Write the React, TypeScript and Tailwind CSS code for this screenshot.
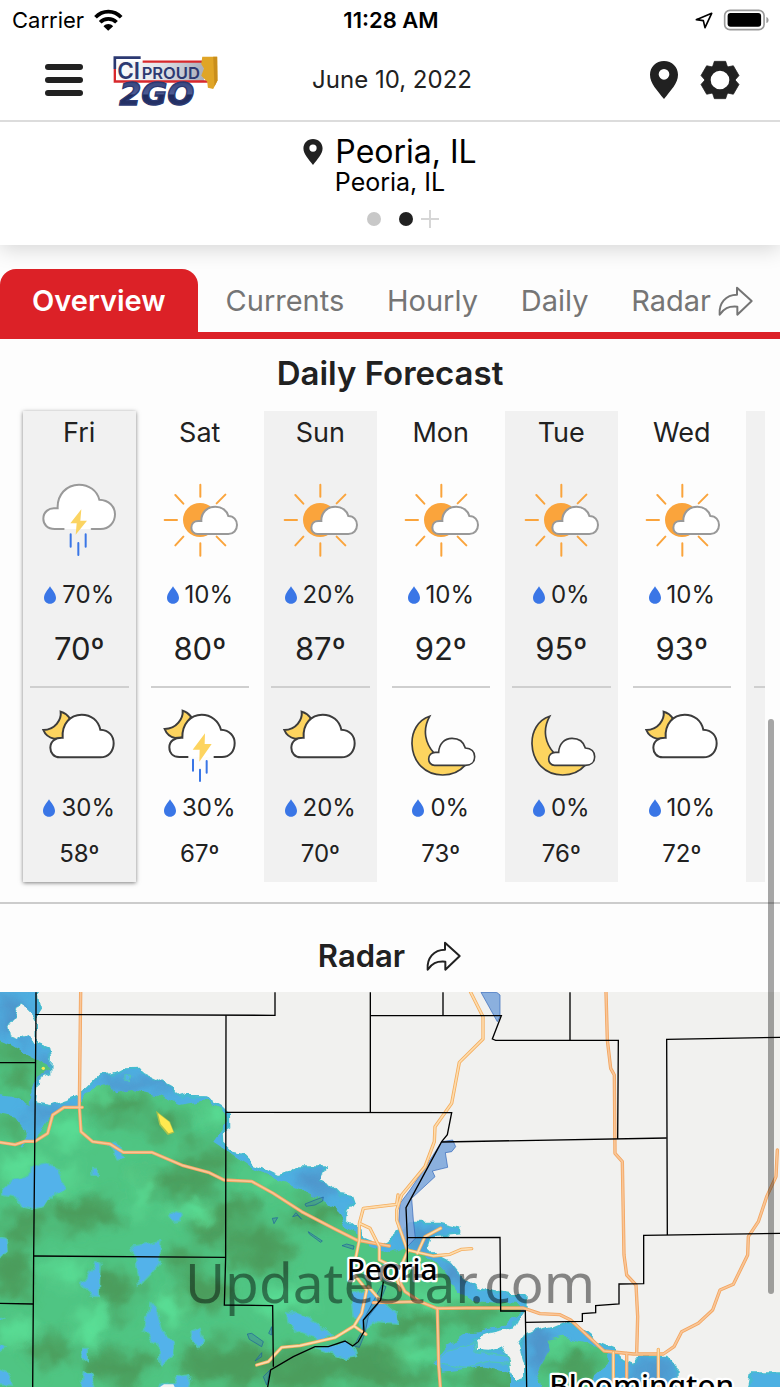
import React from 'react';

type IconName = 'dayStorm' | 'partlySunny' | 'nightCloud' | 'nightStorm' | 'moonCloud';

interface Day {
  name: string;
  dayIcon: IconName;
  dayPrecip: string;
  high: string;
  nightIcon: IconName;
  nightPrecip: string;
  low: string;
}

const days: Day[] = [
  { name: 'Fri', dayIcon: 'dayStorm', dayPrecip: '70%', high: '70º', nightIcon: 'nightCloud', nightPrecip: '30%', low: '58º' },
  { name: 'Sat', dayIcon: 'partlySunny', dayPrecip: '10%', high: '80º', nightIcon: 'nightStorm', nightPrecip: '30%', low: '67º' },
  { name: 'Sun', dayIcon: 'partlySunny', dayPrecip: '20%', high: '87º', nightIcon: 'nightCloud', nightPrecip: '20%', low: '70º' },
  { name: 'Mon', dayIcon: 'partlySunny', dayPrecip: '10%', high: '92º', nightIcon: 'moonCloud', nightPrecip: '0%', low: '73º' },
  { name: 'Tue', dayIcon: 'partlySunny', dayPrecip: '0%', high: '95º', nightIcon: 'moonCloud', nightPrecip: '0%', low: '76º' },
  { name: 'Wed', dayIcon: 'partlySunny', dayPrecip: '10%', high: '93º', nightIcon: 'nightCloud', nightPrecip: '10%', low: '72º' },
];

const WeatherIcon: React.FC<{ name: IconName }> = ({ name }) => {
  if (name === 'dayStorm') {
    return (
      <svg viewBox="118 240 240 240" className="w-20 h-20" strokeWidth="6" strokeLinecap="round">
        <path
          d="M192 387H165C143 387 131 373 131 356C131 336 147 324 165 325H174C172 285 200 254 238 254C268 254 292 272 299 299C328 300 346 320 346 343C346 368 328 387 303 387H276"
          fill="#fff"
          stroke="#999"
        />
        <path d="M245 328L212 370H231L228 404L262 362H242Z" fill="#fbd462" />
        <path d="M213 403V440M236 429V465M258 403V440" stroke="#3a76e6" />
      </svg>
    );
  }

  if (name === 'partlySunny') {
    return (
      <svg viewBox="479 240 240 240" className="w-20 h-20" strokeWidth="6" strokeLinecap="round">
        <circle cx="599" cy="360" r="51" fill="#faa43c" />
        <path
          d="M600 254V290M600 430V467M493 360H530M525 285L549 311M675 284L649 310M525 436L549 410M649 410L675 436"
          stroke="#faa43c"
        />
        <path
          d="M593 402C581 402 573 393 573 383C573 371 582 363 594 363H603C602 338 620 320 645 320C665 320 680 332 684 348C700 348 710 360 710 375C710 391 699 402 684 402Z"
          fill="#fff"
          stroke="#999"
        />
      </svg>
    );
  }

  if (name === 'nightCloud') {
    return (
      <svg viewBox="118 70 240 240" className="w-20 h-20" stroke="#3c3c3c" strokeWidth="6">
        <path d="M183 93C186 117 166 148 131 148C137 163 148 171 163 174L190 172L210 112C204 104 196 97 183 93Z" fill="#fdd45f" />
        <path
          d="M180 230C163 230 152 217 152 201C152 182 167 170 189 171C186 130 211 102 246 102C275 102 296 120 302 147C328 148 342 166 342 188C342 212 326 230 302 230Z"
          fill="#fff"
        />
      </svg>
    );
  }

  if (name === 'nightStorm') {
    return (
      <svg viewBox="479 70 240 240" className="w-20 h-20" strokeWidth="6">
        <path
          d="M547 90C549 113 529 145 493 145C499 161 510 169 524 172L550 170L572 108C566 100 558 93 547 90Z"
          fill="#fdd45f"
          stroke="#3c3c3c"
        />
        <path
          d="M564 229H537C518 229 507 217 507 200C507 182 522 170 546 171C545 130 570 102 604 102C632 102 655 121 662 147C688 148 703 167 703 187C703 212 688 229 665 229H640"
          fill="#fff"
          stroke="#3c3c3c"
        />
        <path d="M614 158L577 207H598L597 243L634 190H613Z" fill="#fdd45f" />
        <path d="M578 237V270M599 267V301M619 241V276" stroke="#3a76e6" strokeLinecap="round" />
      </svg>
    );
  }

  return (
    <svg viewBox="62 70 240 240" className="w-20 h-20" stroke="#3c3c3c" strokeWidth="5">
      <path d="M148 107C112 119 94 153 95 190C97 245 135 283 187 283C217 283 240 270 254 254L160 216C137 190 124 150 148 107Z" fill="#fdd45f" />
      <path
        d="M163 254C152 254 145 245 145 235C145 224 153 215 165 215H175C176 190 192 173 215 173C235 173 250 184 255 202C273 203 283 214 283 228C283 244 272 254 255 254Z"
        fill="#fff"
      />
    </svg>
  );
};

const PinIcon: React.FC<{ className: string }> = ({ className }) => (
  <svg viewBox="0 0 84 114" className={className}>
    <path d="M42 0C18 0 0 18 0 41C0 67 22 88 42 114C62 88 84 67 84 41C84 18 66 0 42 0ZM42 24A16 16 0 1 1 42 56A16 16 0 0 1 42 24Z" fill="#212121" />
  </svg>
);

const GearIcon: React.FC = () => (
  <svg viewBox="-60 -60 120 120" className="w-10 h-10">
    <circle r="37" fill="none" stroke="#212121" strokeWidth="18" />
    {[0, 60, 120, 180, 240, 300].map((angle) => (
      <path key={angle} d="M-23 -38L-17 -56H17L23 -38Z" transform={`rotate(${angle})`} fill="#212121" stroke="#212121" strokeWidth="2" />
    ))}
  </svg>
);

const ShareArrow: React.FC = () => (
  <svg viewBox="979 80 111 96" className="w-[37px] h-8" fill="none" stroke="currentColor" strokeWidth="6" strokeLinejoin="round">
    <path d="M1039 88L1083 128L1040 169V145C1012 143 1000 150 987 169C984 135 1005 109 1039 109Z" />
  </svg>
);

const Logo: React.FC = () => (
  <svg viewBox="336 163 320 154" className="w-[107px] h-[51px] overflow-visible" role="img" aria-label="CIProud 2Go">
    <defs>
      <linearGradient id="plate" x1="0" x2="1">
        <stop offset="0" stopColor="#fff" />
        <stop offset="0.5" stopColor="#e3e5ea" />
        <stop offset="1" stopColor="#a9aebb" />
      </linearGradient>
      <linearGradient id="navy" x1="0" x2="0" y1="0" y2="1">
        <stop offset="0" stopColor="#2b3972" />
        <stop offset="0.5" stopColor="#4d5b93" />
        <stop offset="0.55" stopColor="#1f2a5c" />
        <stop offset="1" stopColor="#2b3972" />
      </linearGradient>
    </defs>
    <path d="M343 183H612V242H343Z" fill="url(#plate)" />
    <path d="M427 183H618M343 205V243H624" fill="none" stroke="#d8282c" strokeWidth="7" />
    <path d="M343 205V171H421" fill="none" stroke="#2b3972" strokeWidth="8" />
    <path d="M607 168H652L653 240L640 266L624 262L622 244L604 226L612 204L604 190Z" fill="#e0a526" />
    <path d="M640 168H652L653 240L644 258Z" fill="#c98e1c" />
    <text x="350" y="235" fontSize="68" fontWeight="600" className="font-['Inter',sans-serif]" fill="#2d3a72">CI</text>
    <text x="424" y="235" fontSize="50" fontWeight="600" className="font-['Inter',sans-serif]" fill="#2d3a72">PROUD</text>
    <text x="356" y="314" fontSize="96" fontWeight="700" fontStyle="italic" className="font-['DejaVu_Sans',sans-serif]" fill="url(#navy)" stroke="#2b3972" strokeWidth="4">2GO</text>
  </svg>
);

const Precip: React.FC<{ value: string }> = ({ value }) => (
  <div className="flex items-center justify-center gap-1.5 h-8 text-2xl leading-8">
    <svg viewBox="0 0 34 50" className="w-3 h-[18px]">
      <path d="M17 0C22 9 34 20 34 33C34 43 27 50 17 50C7 50 0 43 0 33C0 20 12 9 17 0Z" fill="#3a76e6" />
    </svg>
    <span>{value}</span>
  </div>
);

const DayCard: React.FC<{ day: Day; index: number }> = ({ day, index }) => (
  <li
    className={`flex-1 min-w-0 flex flex-col items-center ${index % 2 === 0 ? 'bg-[#f1f1f1]' : ''} ${
      index === 0 ? 'shadow-[0_1px_4px_rgba(0,0,0,0.5)]' : ''
    }`}
  >
    <h3 className="h-[69px] pt-1 text-[27px] leading-9">{day.name}</h3>
    <WeatherIcon name={day.dayIcon} />
    <div className="mt-[19px]">
      <Precip value={day.dayPrecip} />
    </div>
    <p className="mt-[18px] mb-[17px] text-[31px] leading-10">{day.high}</p>
    <hr className="w-full border-0 px-[7px] h-0.5 bg-[#cfcfcf] bg-clip-content" />
    <div className="mt-4">
      <WeatherIcon name={day.nightIcon} />
    </div>
    <div className="mt-2">
      <Precip value={day.nightPrecip} />
    </div>
    <p className="mt-3.5 mb-3 text-2xl leading-8">{day.low}</p>
  </li>
);

// Map coordinates run at three units per pixel of a 780px wide screen.
const rainOutline =
  'M-40 10H108L120 82L108 100V190L145 205L150 230L148 280L112 300L105 370L150 378L200 360L235 345L265 320L300 285L340 283L375 265L415 263L430 282L470 300L515 325L550 350L620 352L665 378L687 400L688 440L665 455L667 490L690 512L725 520L760 555L800 570L830 585L870 575L885 562H975L960 600L995 620L1020 645L1055 650L1060 665L1040 690L1035 720L1060 740L1085 750L1090 775L1145 798L1215 740L1240 728H1320L1378 742V760L1290 770L1280 800L1310 830L1350 850L1395 905L1450 930L1530 945H1577V985L1540 1040L1470 1055L1440 1065L1422 1080L1425 1112L1470 1115L1500 1105L1520 1125L1530 1180L1545 1205H1560L1575 1200V1150L1560 1100L1577 1060L1660 1040L1690 1028L1740 1045L1790 1085L1850 1110L1855 1135L1900 1155L1920 1130L2000 1130L2030 1165V1260H-40ZM2240 1260L2255 1180H2380V1260Z';

const counties = [
  'M108 37V103L825 106V37',
  'M108 103L101 828L98 1221',
  'M0 248H106M0 970L100 972',
  'M678 106L677 832L673 975L818 977L820 1160',
  'M101 828L677 832',
  'M678 397L1355 398L1342 464L1325 485L1218 683L1222 773V850',
  'M1111 37V397M1111 106L1504 107L1477 177L1487 181H1855L1853 477',
  'M1329 37V106M1710 37V181',
  'M1325 486L2000 474',
  'M2340 172L2000 178L2002 765',
  'M1222 773L1500 772L1502 993H1576L1580 1221',
  'M2340 760L1931 766V911L1857 912V972L1787 977V998L1747 1001V1024L1576 1027',
  'M1150 905L1142 960L1090 1020L1092 1055L1075 1085L1058 1098L1035 1083L985 1100L945 1100L880 1130L812 1170L803 1221',
];

const highways = [
  'M242 37L238 380L243 455L278 485L330 492L370 517H455L550 557L625 577L672 600L755 604L820 640L905 695L1000 745L1070 780L1168 798',
  'M0 487L45 494L75 484H105L143 460L158 405L192 382H247',
  'M1120 968L1260 965L1310 985L1400 984H1570L1620 1001L1680 1004L1712 1020L1812 1113L1900 1122L1990 1122L2022 1100L2045 1055L2095 1030L2138 990L2160 930L2200 913L2243 825L2245 770L2275 725L2300 650L2328 590L2332 510',
  'M1818 37L1822 180L1832 265L1843 285L1845 520L1867 545L1872 825L1880 885L1908 915L1913 1010L1910 1120',
  'M1312 985L1316 1155L1321 1221',
  'M1197 900L1215 935L1260 965M1880 1120V1221',
];

const roads = [
  'M1412 37L1449 110V177L1378 247L1355 370L1305 440L1303 485L1275 560L1205 645L1190 690V720L1222 810L1300 828L1350 823L1385 808L1415 806',
  'M1078 730L1090 685L1190 673L1194 645M1078 730L1110 745L1138 800V840L1170 855M1078 730V780L1068 830',
  'M1252 820L1275 770L1322 745',
  'M770 1155L805 1145L845 1102L900 1097L1005 1073L1062 1038L1098 1063M1062 1038L1085 1000L1100 930L1060 880M1105 920L1140 960',
  'M1222 815L1190 890L1200 930M1840 1117V1221M1975 1108V1221',
];

// Ellipses as [cx, cy, rx, ry]
const darkPatches = [
  [45, 225, 70, 24], [60, 300, 60, 30], [350, 380, 90, 34], [500, 430, 60, 46], [620, 530, 90, 34],
  [540, 610, 130, 40], [240, 700, 110, 50], [630, 730, 70, 60], [780, 800, 100, 60], [960, 700, 90, 34],
  [350, 930, 60, 66], [610, 930, 80, 60], [680, 1150, 130, 70], [350, 1160, 100, 56], [910, 1170, 130, 50],
  [1110, 1150, 110, 60], [1240, 1030, 100, 36], [1420, 1010, 90, 22], [1460, 1200, 110, 30], [1720, 1160, 70, 40],
  [40, 880, 60, 80], [60, 740, 60, 40], [730, 690, 60, 36], [160, 1110, 60, 40], [1180, 1210, 120, 30], [40, 430, 50, 20], [540, 840, 60, 30],
];

const lightPatches = [
  [200, 460, 60, 26], [280, 350, 36, 20], [430, 640, 20, 60], [570, 690, 50, 30], [60, 560, 60, 26],
  [200, 600, 30, 26], [200, 870, 70, 22], [270, 1030, 30, 70], [520, 980, 30, 46], [860, 960, 80, 24],
  [40, 1060, 50, 26], [840, 600, 90, 14], [640, 400, 50, 24], [1320, 950, 90, 20], [1220, 1120, 70, 20], [1690, 1085, 60, 14],
];

const RadarMap: React.FC = () => (
  <div className="relative overflow-hidden">
    <svg viewBox="0 36 2340 1185" className="block w-full" fill="none">
      <defs>
        <filter id="haze" filterUnits="userSpaceOnUse" x="-200" y="-100" width="2740" height="1500">
          <feGaussianBlur stdDeviation="20" result="blurred" />
          <feTurbulence type="fractalNoise" baseFrequency="0.012" numOctaves="2" seed="4" result="noise" />
          <feDisplacementMap in="blurred" in2="noise" scale="110" xChannelSelector="R" yChannelSelector="G" />
          <feGaussianBlur stdDeviation="7" />
        </filter>
        <filter id="ragged" filterUnits="userSpaceOnUse" x="-100" y="0" width="2540" height="1300">
          <feTurbulence type="fractalNoise" baseFrequency="0.04" numOctaves="1" seed="2" result="noise" />
          <feDisplacementMap in="SourceGraphic" in2="noise" scale="26" xChannelSelector="R" yChannelSelector="G" />
        </filter>
        <clipPath id="outline">
          <path d={rainOutline} />
        </clipPath>
        <clipPath id="rain">
          <path d="M-40 175L0 180C40 195 60 215 105 235L140 250L148 270L110 295L95 320L92 375C60 360 40 350 0 345H-40Z" />
          <path d="M-40 400H0L45 410L70 440L80 470L60 500L110 480L130 440L150 410L190 385L240 385L250 350L290 320L330 312L345 340L400 330L470 345L540 375L620 360L665 385L685 420L640 485L700 525L760 565L850 605L950 650L1015 690L1035 740L1080 770L1110 800L1170 820L1215 805L1290 830L1330 870L1370 930L1420 960L1560 970V1000L1500 1040L1400 1060L1340 1100L1300 1150L1330 1175L1450 1160L1530 1180V1260H-40Z" />
          <path d="M1640 1260L1610 1180L1650 1110L1640 1080L1690 1070L1770 1090L1820 1115L1825 1150L1780 1190L1790 1260Z" />
        </clipPath>
      </defs>
      <rect y="36" width="2340" height="1185" fill="#f1f1ef" />

      {/* Light rain */}
      <g filter="url(#ragged)">
        <path d={rainOutline} fill="#4eb0e2" stroke="#45bcd0" strokeWidth="6" />
        <g clipPath="url(#outline)">
          <g filter="url(#haze)" fill="#4f93c9">
            <ellipse cx="40" cy="120" rx="40" ry="80" />
            <ellipse cx="130" cy="240" rx="20" ry="60" />
            <ellipse cx="150" cy="390" rx="90" ry="20" />
            <ellipse cx="430" cy="305" rx="140" ry="20" />
            <ellipse cx="950" cy="605" rx="90" ry="30" />
            <ellipse cx="1340" cy="890" rx="70" ry="30" />
            <ellipse cx="1250" cy="770" rx="60" ry="30" />
            <ellipse cx="1620" cy="1100" rx="40" ry="70" />
            <ellipse cx="1960" cy="1170" rx="70" ry="30" />
          </g>
        </g>
      </g>
      <path
        d="M60 72L80 85L100 105L108 120V190L70 165L50 178L28 170L24 135L45 108Z"
        fill="#f1f1ef"
        stroke="#45bcd0"
        strokeWidth="3"
        filter="url(#ragged)"
      />

      {/* Heavier rain */}
      <g filter="url(#ragged)">
        <g clipPath="url(#rain)">
          <rect x="-40" y="36" width="2420" height="1225" fill="#50c583" />
          <g filter="url(#haze)" fill="#4c9c5b">
            {darkPatches.map(([cx, cy, rx, ry]) => (
              <ellipse key={`${cx}-${cy}`} cx={cx} cy={cy} rx={rx} ry={ry} />
            ))}
          </g>
          <g filter="url(#haze)" fill="#5ce399">
            {lightPatches.map(([cx, cy, rx, ry]) => (
              <ellipse key={`${cx}-${cy}`} cx={cx} cy={cy} rx={rx} ry={ry} />
            ))}
          </g>
        </g>
      </g>
      <g fill="#52b2ea" stroke="#50c5b8" strokeWidth="4" filter="url(#ragged)">
        <path d="M10 625L40 595L75 590L110 555L140 548L175 570L190 610L197 628L160 640L135 680L100 688L65 680L50 655L8 645Z" />
        <path d="M325 490L350 480L362 505L368 535L350 540Z" />
        <path d="M512 712L525 695L545 700L538 722L520 726Z" />
        <path d="M398 798L440 790L483 782L478 850L450 885L418 917L412 860Z" />
        <path d="M285 845L300 850L298 950L270 948L245 915L268 885Z" />
        <path d="M450 968L470 990L485 1050L520 1090L518 1125L480 1155L478 1100L430 1055L445 1010Z" />
        <path d="M570 1055L600 1042L608 1085L595 1105L575 1080Z" />
        <path d="M860 995L905 1005L960 1035L1000 1070L960 1080L900 1060L865 1035Z" />
        <path d="M248 1105H265V1150L240 1130ZM250 1175L275 1180L290 1240H245Z" />
        <path d="M470 1240L480 1215L520 1210L535 1190L560 1185L572 1200L565 1240Z" />
        <path d="M-20 770L18 775L22 810L-20 865ZM-20 1000L10 1015L-20 1025ZM-20 1085L15 1100L-20 1125ZM-20 1160L25 1180L38 1215H-20Z" />
        <path d="M950 1105L1035 1085L1060 1100L1070 1130L1040 1135Z" />
        <path d="M1055 940L1100 925L1145 960L1190 1000L1195 1030L1130 1025L1095 1050L1062 1010Z" />
        <path d="M275 568H292V590L276 585ZM375 288L392 290L388 308L375 302Z" />
        <path d="M1310 1150L1340 1115L1425 1090V1115L1520 1128L1530 1150L1460 1145L1400 1165Z" />
      </g>
      <path d="M480 1221L492 1213H520L524 1221Z" fill="#f1f1ef" />
      <path d="M468 392L510 425L523 458L503 465L478 435Z" fill="#a9c24c" />
      <path d="M474 400L508 426L520 455L506 460L482 432Z" fill="#ffe94f" />
      <circle cx="130" cy="265" r="5" fill="#ffe94f" />

      {/* Rivers and lakes */}
      <g fill="#7fa9dc" fillOpacity="0.9" stroke="#2f63b8" strokeWidth="2">
        <path d="M1443 37H1490L1500 45V110L1492 125Z" />
        <path d="M1325 485L1358 480L1367 500L1355 515L1336 518L1343 562L1297 573L1305 590L1235 655L1240 720L1246 775L1222 800L1195 745L1200 670L1230 630L1290 540Z" />
      </g>
      <g fill="#3f8f9c" fillOpacity="0.5" stroke="#1f5f9f" strokeWidth="2">
        <path d="M915 672L945 660L970 651L968 663L945 675L918 679ZM817 715L833 713L822 731ZM878 710L888 698L905 718L893 706ZM925 755L967 783L962 787L928 762ZM1026 797L1040 792L1062 798L1060 808Z" />
        <path d="M742 1062L755 1060L790 1085L785 1100L748 1078ZM806 1060L815 1040V1065ZM765 1143L785 1118V1130ZM790 1190L810 1170L800 1215Z" />
        <path d="M1146 915L1158 920L1140 965L1105 1010L1095 1060L1078 1102L1062 1098L1088 1050L1090 1020Z" />
      </g>

      <g strokeLinejoin="round" strokeLinecap="round">
        {highways.map((d) => (
          <path key={d} d={d} stroke="#f3a55f" strokeWidth="10" />
        ))}
        {highways.map((d) => (
          <path key={d} d={d} stroke="#f9c698" strokeWidth="5" />
        ))}
        {roads.map((d) => (
          <path key={d} d={d} stroke="#f5ae5e" strokeWidth="10" />
        ))}
        {roads.map((d) => (
          <path key={d} d={d} stroke="#fddcae" strokeWidth="5" />
        ))}
      </g>
      {counties.map((d) => (
        <path key={d} d={d} stroke="#000" strokeWidth="4" />
      ))}

      <g
        className="font-['Noto_Sans',sans-serif]"
        fontSize="89"
        fontWeight="500"
        fill="#000"
        stroke="#fff"
        strokeWidth="14"
        strokeLinejoin="round"
        paintOrder="stroke"
      >
        <text x="1040" y="899">Peoria</text>
        <text x="1648" y="1248">Bloomington</text>
      </g>
    </svg>
    <p className="absolute inset-x-0 top-[250px] text-center text-[55px] leading-[80px] text-black/45 font-['Noto_Sans',sans-serif]">UpdateStar.com</p>
  </div>
);

const tabs = ['Currents', 'Hourly', 'Daily'];

const App: React.FC = () => {
  return (
    <div className="relative bg-[#fdfdfd] text-[#212121] font-['Inter',sans-serif] overflow-hidden">
      <header className="relative z-10 bg-white">
        {/* Status bar */}
        <div className="grid grid-cols-3 items-center h-10 pl-3 pr-2.5 text-black text-[22px] leading-7">
          <div className="flex items-center gap-2.5">
            <span>Carrier</span>
            <svg viewBox="282 23 86 66" className="w-[29px] h-[22px]" fill="none" stroke="#000" strokeWidth="11">
              <path d="M286 48C307 25 342 25 363 48" />
              <path d="M300 63C313 49 336 49 349 63" />
              <path d="M324 88L310 75C318 66 331 66 339 75Z" fill="#000" stroke="none" />
            </svg>
          </div>
          <span className="text-center font-semibold">11:28 AM</span>
          <div className="flex items-center justify-end gap-2.5">
            <svg viewBox="918 34 54 51" className="w-[18px] h-[17px]" fill="none" stroke="#000" strokeWidth="5" strokeLinejoin="round">
              <path d="M968 38L948 81L943 60L922 57Z" />
            </svg>
            <svg viewBox="1000 24 141 67" className="w-[47px] h-[22px]">
              <rect x="1004" y="28" width="120" height="59" rx="16" fill="none" stroke="#9a9a9a" strokeWidth="5" />
              <rect x="1013" y="36" width="102" height="42" rx="9" fill="#000" />
              <path d="M1131 48C1140 52 1140 63 1131 67Z" fill="#9a9a9a" />
            </svg>
          </div>
        </div>

        <div className="grid grid-cols-3 items-center h-[82px] pl-11 pr-10 border-b-2 border-[#dcdcdc]">
          <div className="flex items-center gap-7">
            <button type="button" aria-label="Menu" className="flex flex-col gap-[7px] w-10 px-px">
              <span className="h-1.5 rounded-full bg-[#212121]" />
              <span className="h-1.5 rounded-full bg-[#212121]" />
              <span className="h-1.5 rounded-full bg-[#212121]" />
            </button>
            <Logo />
          </div>
          <span className="text-center text-2xl leading-8">June 10, 2022</span>
          <div className="flex items-center justify-end gap-[22px]">
            <button type="button" aria-label="Locations">
              <PinIcon className="w-7 h-[38px]" />
            </button>
            <button type="button" aria-label="Settings">
              <GearIcon />
            </button>
          </div>
        </div>
      </header>

      {/* Current location */}
      <section className="relative flex flex-col items-center h-[123px] pt-3 bg-white text-black shadow-[0_4px_20px_rgba(0,0,0,0.16)]">
        <h1 className="flex items-center gap-3 text-[32px] leading-9">
          <PinIcon className="w-5 h-[26px]" />
          Peoria, IL
        </h1>
        <p className="text-[25px] leading-6">Peoria, IL</p>
        <div className="flex items-center mt-4 pl-[26px]">
          <span className="w-3.5 h-3.5 rounded-full bg-[#c8c8c8]" />
          <span className="w-3.5 h-3.5 ml-[18px] rounded-full bg-[#212121]" />
          <button type="button" aria-label="Add location" className="ml-2">
            <svg viewBox="0 0 18 18" className="w-[18px] h-[18px]" stroke="#d6d6d6" strokeWidth="2">
              <path d="M9 0V18M0 9H18" />
            </svg>
          </button>
        </div>
      </section>

      <nav className="flex mt-6 h-[70px] border-b-[7px] border-[#dc2127] text-[29px] leading-[64px] text-[#757575]">
        <a href="#overview" className="flex-none px-8 rounded-t-2xl bg-[#dc2127] text-white font-semibold">
          Overview
        </a>
        <div className="flex flex-1 justify-between pl-7 pr-[26px]">
          {tabs.map((tab) => (
            <a key={tab} href={`#${tab.toLowerCase()}`}>
              {tab}
            </a>
          ))}
          <a href="#radar" className="flex items-center gap-1.5">
            Radar
            <ShareArrow />
          </a>
        </div>
      </nav>

      <section id="overview">
        <h2 className="pt-3 pb-4 text-center text-[33px] leading-[44px] font-semibold">Daily Forecast</h2>
        <ul className="flex gap-2 pl-[23px] pr-[15px]">
          {days.map((day, index) => (
            <DayCard key={day.name} day={day} index={index} />
          ))}
          {/* Next card peeking in from the right */}
          <li className="w-[19px] bg-[#f1f1f1] pt-[275px]">
            <hr className="ml-2 border-0 h-0.5 bg-[#cfcfcf]" />
          </li>
        </ul>
      </section>

      <section id="radar" className="mt-5 border-t-2 border-[#cccccc]">
        <h2 className="flex items-center justify-center gap-5 h-[88px] pt-4 text-[31px] leading-10 font-semibold">
          Radar
          <ShareArrow />
        </h2>
        <RadarMap />
      </section>

      <div className="absolute right-1.5 top-[719px] w-1.5 h-[575px] rounded-full bg-black/35" />
    </div>
  );
};

export default App;
